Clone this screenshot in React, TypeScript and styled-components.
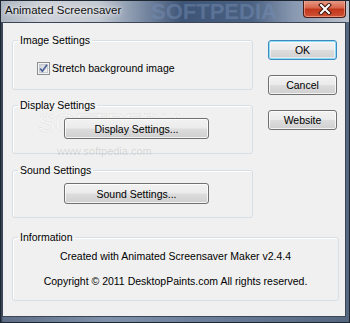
import React from 'react';
import styled, { createGlobalStyle, css } from 'styled-components';

const GlobalStyle = createGlobalStyle`
  html, body {
    margin: 0;
    padding: 0;
    background: #2f3b4c;
  }
  * {
    box-sizing: border-box;
  }
`;

const Window = styled.div`
  position: relative;
  width: 350px;
  height: 323px;
  display: flex;
  flex-direction: column;
  overflow: hidden;
  font-family: 'Liberation Sans', Arial, sans-serif;
  font-size: 10.5px;
  color: #000;
  background: linear-gradient(
    to right,
    #2e3a4c 0px,
    #5d6e86 2px,
    #7f91aa 30%,
    #6a7d99 60%,
    #55677f 100%
  );
  border: 1px solid #1f2733;
`;

const TitleBar = styled.div`
  position: relative;
  height: 21px;
  display: flex;
  align-items: flex-start;
  justify-content: space-between;
  padding-left: 4px;
  overflow: hidden;
  background: linear-gradient(
    to right,
    #aab3bf 0%,
    #cfd3d9 12%,
    #c3c9d1 28%,
    #7d8ea6 40%,
    #3e5476 52%,
    #4b6283 72%,
    #8898b0 84%,
    #b9c1cc 100%
  );
`;

const Title = styled.span`
  position: relative;
  z-index: 1;
  margin-top: 3px;
  font-size: 11.5px;
  color: #101010;
  text-shadow: 0 0 6px rgba(255, 255, 255, 0.9), 0 0 3px rgba(255, 255, 255, 0.8);
`;

const TitleMark = styled.span`
  position: absolute;
  left: 150px;
  top: 0;
  font-size: 22px;
  line-height: 22px;
  font-weight: bold;
  color: rgba(120, 145, 185, 0.45);
`;

const CloseButton = styled.button`
  position: relative;
  z-index: 1;
  width: 43px;
  height: 18px;
  margin: -1px 3px 0 0;
  padding: 0;
  display: flex;
  align-items: center;
  justify-content: center;
  border: 1px solid #4a1c14;
  border-top: none;
  border-radius: 0 0 4px 4px;
  background: linear-gradient(to bottom, #e8a08c 0%, #d8674c 45%, #c2371b 55%, #cf5236 100%);
  box-shadow: inset 0 0 0 1px rgba(255, 200, 185, 0.5);
`;

const Frame = styled.div`
  flex: 1;
  display: flex;
  padding: 0 3px 5px 1px;
`;

const Client = styled.div`
  flex: 1;
  display: flex;
  flex-direction: column;
  gap: 12px;
  padding: 10px 0 0 9px;
  background: #f0f0f0;
  border: 1px solid #3d4656;
`;

const TopRow = styled.div`
  display: flex;
  gap: 15px;
`;

const LeftColumn = styled.div`
  width: 241px;
  display: flex;
  flex-direction: column;
`;

const RightColumn = styled.div`
  display: flex;
  flex-direction: column;
  gap: 15px;
  padding-top: 7px;
`;

const Group = styled.fieldset<{ $height: number; $width?: number; $gap?: number }>`
  margin: ${({ $gap }) => $gap ?? 0}px 0 0 0;
  padding: 0;
  min-width: 0;
  width: ${({ $width }) => $width ?? 241}px;
  height: ${({ $height }) => $height}px;
  border: 1px solid #d5dfe5;
  border-radius: 3px;
  box-shadow: inset 1px 1px 0 #ffffff;
`;

const Legend = styled.legend`
  margin-left: 5px;
  padding: 0 2px;
  line-height: 14px;
  font-size: 10.5px;
`;

const GroupBody = styled.div<{ $top: number; $left?: number }>`
  position: relative;
  padding: ${({ $top }) => $top}px 0 0 ${({ $left }) => $left ?? 0}px;
`;

const CheckRow = styled.label`
  display: flex;
  align-items: center;
  gap: 2px;
  height: 14px;
  line-height: 14px;
`;

const buttonBase = css`
  position: relative;
  padding: 0;
  font-family: 'Liberation Sans', Arial, sans-serif;
  font-size: 10.5px;
  color: #000;
  border: 1px solid #707070;
  border-radius: 3px;
  background: linear-gradient(to bottom, #f2f2f2 0%, #ebebeb 48%, #dddddd 52%, #cfcfcf 100%);
  box-shadow: inset 0 0 0 1px rgba(255, 255, 255, 0.75);
`;

const PushButton = styled.button<{ $default?: boolean }>`
  ${buttonBase}
  width: 69px;
  height: 20px;
  ${({ $default }) =>
    $default &&
    css`
      border-color: #3c8ac0;
      box-shadow: inset 0 0 0 1px #8fdcf6, inset 0 0 0 2px rgba(255, 255, 255, 0.5);
    `}
`;

const WideButton = styled.button`
  ${buttonBase}
  width: 145px;
  height: 21px;
`;

const InfoText = styled.div`
  text-align: center;
  line-height: 25px;
`;

/* faint site watermark that sits behind the display group */
const Watermark = styled.span`
  position: absolute;
  left: 25px;
  top: -2px;
  font-size: 26px;
  line-height: 26px;
  color: rgba(255, 255, 255, 0.5);
  -webkit-text-stroke: 1px rgba(0, 0, 0, 0.07);
  pointer-events: none;
`;

const WatermarkUrl = styled.span`
  position: absolute;
  left: 44px;
  top: 34px;
  font-size: 11px;
  line-height: 11px;
  color: rgba(0, 0, 0, 0.12);
  pointer-events: none;
`;

const CheckBox = () => (
  <svg width="13" height="13" viewBox="0 0 13 13">
    <defs>
      <linearGradient id="cbfill" x1="0" y1="0" x2="1" y2="1">
        <stop offset="0" stopColor="#cbcfd5" />
        <stop offset="1" stopColor="#f6f6f6" />
      </linearGradient>
    </defs>
    <rect x="0.5" y="0.5" width="12" height="12" fill="#f4f4f4" stroke="#8e8f8f" />
    <rect x="2.5" y="2.5" width="8" height="8" fill="url(#cbfill)" stroke="#c6c9ce" />
    <path d="M3.2 6.6 L5.4 9.2 L10 2.8" fill="none" stroke="#4a5f97" strokeWidth="1.7" />
  </svg>
);

const CloseGlyph = () => (
  <svg width="14" height="12" viewBox="0 0 14 12">
    <path d="M3 2 L11 10 M11 2 L3 10" stroke="#3a1510" strokeWidth="4" strokeLinecap="square" />
    <path d="M3 2 L11 10 M11 2 L3 10" stroke="#ffffff" strokeWidth="2" strokeLinecap="square" />
  </svg>
);

export default function App() {
  return (
    <>
      <GlobalStyle />
      <Window>
        <TitleBar>
          <TitleMark>SOFTPEDIA</TitleMark>
          <Title>Animated Screensaver</Title>
          <CloseButton aria-label="Close">
            <CloseGlyph />
          </CloseButton>
        </TitleBar>
        <Frame>
          <Client>
            <TopRow>
              <LeftColumn>
                <Group $height={57}>
                  <Legend>Image Settings</Legend>
                  <GroupBody $top={14} $left={24}>
                    <CheckRow>
                      <CheckBox />
                      Stretch background image
                    </CheckRow>
                  </GroupBody>
                </Group>
                <Group $height={56} $gap={8}>
                  <Legend>Display Settings</Legend>
                  <GroupBody $top={6} $left={51}>
                    <Watermark>SOFTPEDIA</Watermark>
                    <WatermarkUrl>www.softpedia.com</WatermarkUrl>
                    <WideButton>Display Settings...</WideButton>
                  </GroupBody>
                </Group>
                <Group $height={55} $gap={9}>
                  <Legend>Sound Settings</Legend>
                  <GroupBody $top={6} $left={51}>
                    <WideButton>Sound Settings...</WideButton>
                  </GroupBody>
                </Group>
              </LeftColumn>
              <RightColumn>
                <PushButton $default>OK</PushButton>
                <PushButton>Cancel</PushButton>
                <PushButton>Website</PushButton>
              </RightColumn>
            </TopRow>
            <Group $height={71} $width={327}>
              <Legend>Information</Legend>
              <InfoText>
                Created with Animated Screensaver Maker v2.4.4
                <br />
                Copyright © 2011 DesktopPaints.com All rights reserved.
              </InfoText>
            </Group>
          </Client>
        </Frame>
      </Window>
    </>
  );
}
